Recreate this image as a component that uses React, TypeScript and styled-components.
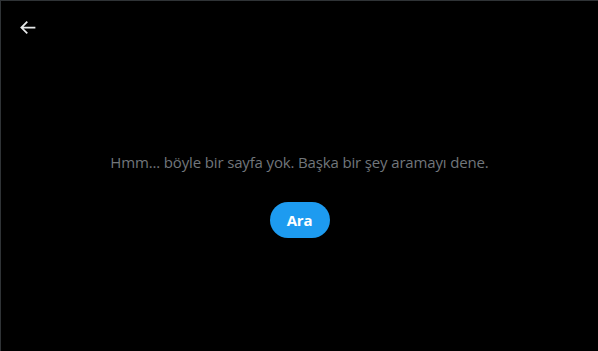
import React from 'react'
import styled, { createGlobalStyle } from 'styled-components'

const GlobalStyle = createGlobalStyle`
	html, body {
		margin: 0;
		padding: 0;
		background: #000;
	}
	body {
		font-family: "Segoe UI", "Open Sans", "Liberation Sans", sans-serif;
	}
`

const Page = styled.div`
	box-sizing: border-box;
	height: 351px;
	width: 598px;
	background: #000;
	border-top: 1px solid #2f3336;
	border-left: 1px solid #2f3336;
	display: flex;
	flex-direction: column;
`

const Header = styled.div`
	height: 52px;
	display: flex;
	align-items: center;
	padding-left: 8px;
`

const BackButton = styled.button`
	width: 36px;
	height: 36px;
	border: none;
	border-radius: 50%;
	background: transparent;
	display: flex;
	align-items: center;
	justify-content: center;
	padding: 0;
	color: #e7e9ea;
	cursor: pointer;
`

const Body = styled.div`
	display: flex;
	flex-direction: column;
	align-items: center;
	padding-top: 99px;
`

const Message = styled.span`
	font-size: 15px;
	line-height: 20px;
	letter-spacing: -0.15px;
	color: #71767b;
`

const SearchButton = styled.button`
	margin-top: 30px;
	height: 36px;
	min-width: 60px;
	padding: 0 16px;
	border: none;
	border-radius: 18px;
	background: #1d9bf0;
	color: #fff;
	font-family: inherit;
	font-size: 15px;
	font-weight: 700;
	letter-spacing: -0.2px;
	cursor: pointer;
`

const BackArrow = () => (
	<svg width="21" height="21" viewBox="0 0 24 24" fill="currentColor">
		<path d="M7.414 13l5.043 5.04-1.414 1.42L3.586 12l7.457-7.46 1.414 1.42L7.414 11H21v2H7.414z" />
	</svg>
)

const App: React.FC = () => {
	return (
		<Page>
			<GlobalStyle />
			<Header>
				<BackButton aria-label="Geri">
					<BackArrow />
				</BackButton>
			</Header>
			<Body>
				<Message>Hmm... böyle bir sayfa yok. Başka bir şey aramayı dene.</Message>
				<SearchButton>Ara</SearchButton>
			</Body>
		</Page>
	)
}

export default App
